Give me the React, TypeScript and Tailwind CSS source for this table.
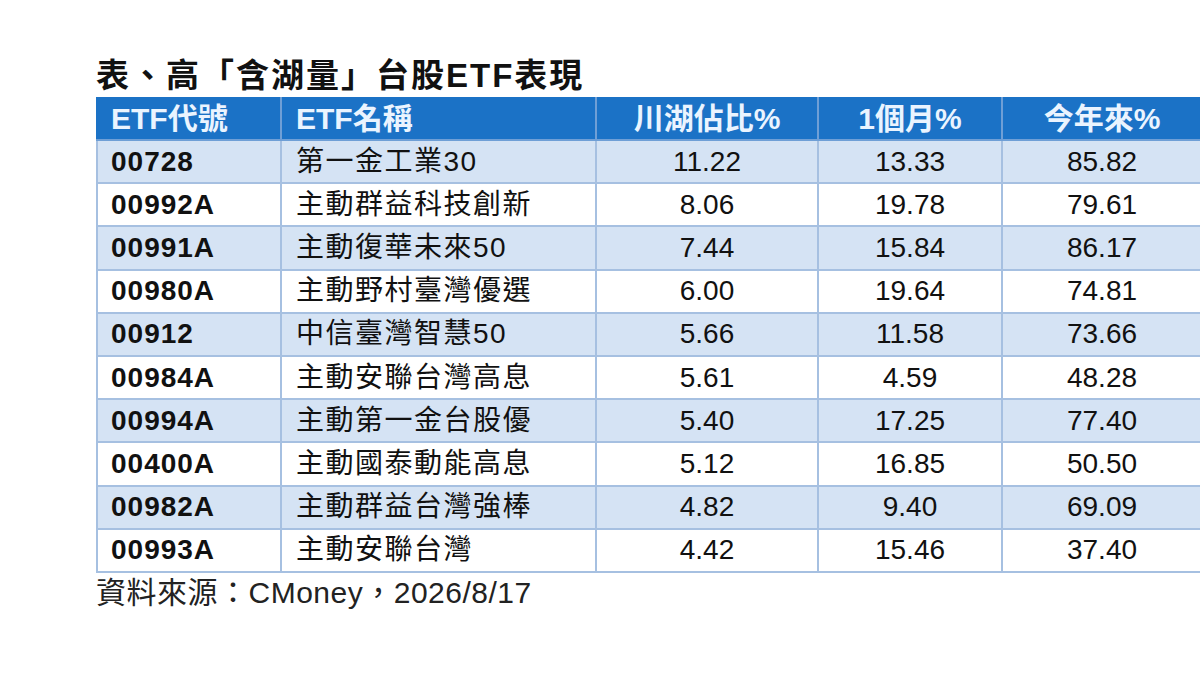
const rows = [
  { code: '00728', name: '第一金工業30', share: '11.22', month: '13.33', ytd: '85.82' },
  { code: '00992A', name: '主動群益科技創新', share: '8.06', month: '19.78', ytd: '79.61' },
  { code: '00991A', name: '主動復華未來50', share: '7.44', month: '15.84', ytd: '86.17' },
  { code: '00980A', name: '主動野村臺灣優選', share: '6.00', month: '19.64', ytd: '74.81' },
  { code: '00912', name: '中信臺灣智慧50', share: '5.66', month: '11.58', ytd: '73.66' },
  { code: '00984A', name: '主動安聯台灣高息', share: '5.61', month: '4.59', ytd: '48.28' },
  { code: '00994A', name: '主動第一金台股優', share: '5.40', month: '17.25', ytd: '77.40' },
  { code: '00400A', name: '主動國泰動能高息', share: '5.12', month: '16.85', ytd: '50.50' },
  { code: '00982A', name: '主動群益台灣強棒', share: '4.82', month: '9.40', ytd: '69.09' },
  { code: '00993A', name: '主動安聯台灣', share: '4.42', month: '15.46', ytd: '37.40' },
];

const font = { fontFamily: '"Liberation Sans", "Noto Sans CJK TC", sans-serif' };

export default function App() {
  return (
    <div
      className="w-[1200px] h-[676px] overflow-hidden bg-white pl-[96px] pt-[55px] text-[#111]"
      style={font}
    >
      <h1 className="h-[42px] text-[33px] leading-[42px] font-bold tracking-[2px]">
        表、高「含湖量」台股ETF表現
      </h1>

      <table className="table-fixed border-collapse w-[1105px]">
        <colgroup>
          <col className="w-[184px]" />
          <col className="w-[315px]" />
          <col className="w-[222px]" />
          <col className="w-[184px]" />
          <col className="w-[200px]" />
        </colgroup>
        <thead>
          <tr className="h-[42px] bg-[#1b72c6] text-[#eaf4ff] text-[30px] leading-none font-bold">
            <th className="border-2 border-[#6f9fd6] border-t-[#1b72c6] border-l-[#1b72c6] text-left pl-[13px] font-bold">ETF代號</th>
            <th className="border-2 border-[#6f9fd6] border-t-[#1b72c6] text-left pl-[14px] font-bold">ETF名稱</th>
            <th className="border-2 border-[#6f9fd6] border-t-[#1b72c6] text-center font-bold">川湖佔比%</th>
            <th className="border-2 border-[#6f9fd6] border-t-[#1b72c6] text-center font-bold">1個月%</th>
            <th className="border-2 border-[#6f9fd6] border-t-[#1b72c6] text-center font-bold">今年來%</th>
          </tr>
        </thead>
        <tbody>
          {rows.map((r, i) => (
            <tr
              key={r.code}
              className={`h-[43.2px] text-[28px] leading-none ${i % 2 === 0 ? 'bg-[#d5e3f4]' : 'bg-white'}`}
            >
              <td className="border-2 border-[#a6c0e1] pl-[13px] font-bold tracking-[1px]">{r.code}</td>
              <td className="border-2 border-[#a6c0e1] pl-[14px] tracking-[1.5px]">{r.name}</td>
              <td className="border-2 border-[#a6c0e1] text-center">{r.share}</td>
              <td className="border-2 border-[#a6c0e1] text-center">{r.month}</td>
              <td className="border-2 border-[#a6c0e1] text-center">{r.ytd}</td>
            </tr>
          ))}
        </tbody>
      </table>

      <p className="text-[30px] leading-[40px] tracking-[0.5px] text-[#222]">資料來源：CMoney，2026/8/17</p>
    </div>
  );
}
